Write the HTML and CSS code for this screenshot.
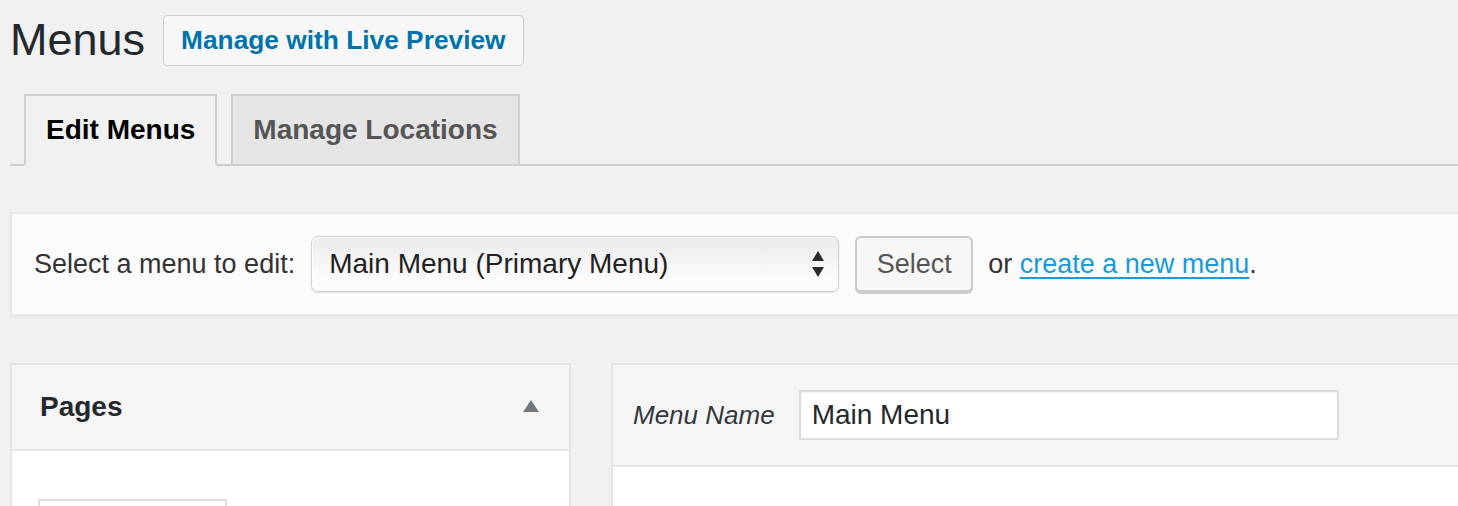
FILE: index.html
```html
<!DOCTYPE html>
<html>
<head>
<meta charset="utf-8">
<link rel="stylesheet" href="styles.css">
</head>
<body>
<div class="wrap">
  <div class="head">
    <h1 class="title">Menus</h1>
    <a class="page-action">Manage with Live Preview</a>
  </div>
  <nav class="tabs">
    <a class="tab active">Edit Menus</a>
    <a class="tab">Manage Locations</a>
  </nav>
  <div class="manage">
    <span class="label">Select a menu to edit:</span>
    <div class="select">
      <span>Main Menu (Primary Menu)</span>
      <svg class="arrows" width="14" height="28" viewBox="0 0 14 28"><polygon points="7,1 13,11 1,11" fill="#2b2b2b"/><polygon points="1,17 13,17 7,27" fill="#2b2b2b"/></svg>
    </div>
    <button class="btn">Select</button>
    <span class="or">or <a class="link">create a new menu</a>.</span>
  </div>
  <div class="cols">
    <div class="side">
      <div class="side-head">
        <h3 class="side-title">Pages</h3>
        <svg class="tri" width="16" height="12" viewBox="0 0 16 12"><polygon points="8,0 16,12 0,12" fill="#72777c"/></svg>
      </div>
      <div class="side-body">
        <div class="mini-input"></div>
      </div>
    </div>
    <div class="main">
      <div class="main-head">
        <span class="name-label">Menu Name</span>
        <div class="name-input">Main Menu</div>
      </div>
      <div class="main-body"></div>
    </div>
  </div>
</div>
</body>
</html>
```
FILE: styles.css
```css
html, body {
  margin: 0;
  padding: 0;
  background: #f1f1f1;
  overflow: hidden;
}
body {
  font-family: "Liberation Sans", Arial, sans-serif;
  color: #23282d;
}
.wrap {
  width: 1500px;
  padding-left: 10px;
  padding-top: 10px;
}
.head {
  display: flex;
  align-items: center;
  height: 60px;
}
.title {
  margin: 0;
  font-size: 45px;
  line-height: 60px;
  font-weight: 400;
  color: #23282d;
}
.page-action {
  margin-left: 18px;
  padding: 8px 17px;
  border: 1px solid #cfcfcf;
  border-radius: 4px;
  background: #f7f7f7;
  color: #0073aa;
  font-weight: 700;
  font-size: 26.3px;
  line-height: 33px;
}
.tabs {
  display: flex;
  align-items: flex-end;
  margin-top: 24px;
  border-bottom: 2px solid #cfcfcf;
}
.tab {
  margin-left: 14px;
  margin-bottom: -2px;
  padding: 10px 20px;
  border: 2px solid #cfcfcf;
  background: #e5e5e5;
  color: #555;
  font-weight: 700;
  font-size: 28px;
  line-height: 48px;
}
.tab.active {
  background: #f1f1f1;
  color: #000;
  border-bottom-color: #f1f1f1;
}
.manage {
  margin-top: 46px;
  display: flex;
  align-items: center;
  height: 60px;
  padding: 20px 20px 20px 22px;
  background: #fbfbfb;
  border: 2px solid #e8e8e8;
  box-shadow: 0 2px 2px rgba(0,0,0,.03);
  font-size: 27px;
  color: #333;
}
.label {
  color: #333;
}
.select {
  margin-left: 16px;
  display: flex;
  align-items: center;
  justify-content: space-between;
  padding: 0 13px 0 17px;
  box-sizing: border-box;
  width: 528px;
  height: 56px;
  border: 1px solid #d3d3d3;
  border-radius: 7px;
  background: linear-gradient(#ebebeb, #fafafa 70%, #fdfdfd);
  box-shadow: inset 1px 1px 1px rgba(255,255,255,.8), 0 1px 2px rgba(0,0,0,.12);
  font-size: 28px;
  color: #222;
}
.arrows {
  display: block;
}
.btn {
  margin-left: 16px;
  width: 118px;
  height: 56px;
  padding: 0;
  border: 2px solid #cccccc;
  border-radius: 6px;
  background: #f7f7f7;
  box-shadow: 0 2px 0 #cccccc;
  font-family: "Liberation Sans", Arial, sans-serif;
  font-size: 27px;
  color: #555;
}
.or {
  margin-left: 15px;
  color: #333;
}
.link {
  color: #1a9ad6;
  text-decoration: underline;
  text-decoration-thickness: 2px;
  text-underline-offset: 4px;
}
.cols {
  display: flex;
  gap: 40px;
  margin-top: 47px;
}
.side {
  width: 561px;
  flex: none;
  box-sizing: border-box;
  border: 2px solid #e5e5e5;
  border-bottom: none;
  background: #fff;
}
.side-head {
  display: flex;
  align-items: center;
  justify-content: space-between;
  height: 84px;
  padding: 0 30px 0 28px;
  background: #f5f5f5;
  border-bottom: 2px solid #e5e5e5;
}
.side-title {
  margin: 0;
  font-size: 28px;
  font-weight: 700;
  color: #23282d;
}
.tri {
  display: block;
  margin-top: -2px;
}
.side-body {
  height: 100px;
  padding: 48px 0 0 26px;
  box-sizing: border-box;
}
.mini-input {
  width: 189px;
  height: 40px;
  border: 2px solid #ddd;
  box-sizing: border-box;
}
.main {
  flex: 1;
  box-sizing: border-box;
  border: 2px solid #e5e5e5;
  border-bottom: none;
  background: #fff;
}
.main-head {
  display: flex;
  align-items: center;
  height: 100px;
  padding-left: 20px;
  background: #f5f5f5;
  border-bottom: 2px solid #e5e5e5;
}
.name-label {
  font-style: italic;
  font-size: 26px;
  color: #32373c;
}
.name-input {
  margin-left: 24px;
  width: 540px;
  height: 50px;
  box-sizing: border-box;
  padding-left: 11px;
  border: 2px solid #dddddd;
  background: #fff;
  box-shadow: inset 0 1px 2px rgba(0,0,0,.07);
  font-size: 28px;
  line-height: 46px;
  color: #23282d;
}
.main-body {
  height: 100px;
}
```
